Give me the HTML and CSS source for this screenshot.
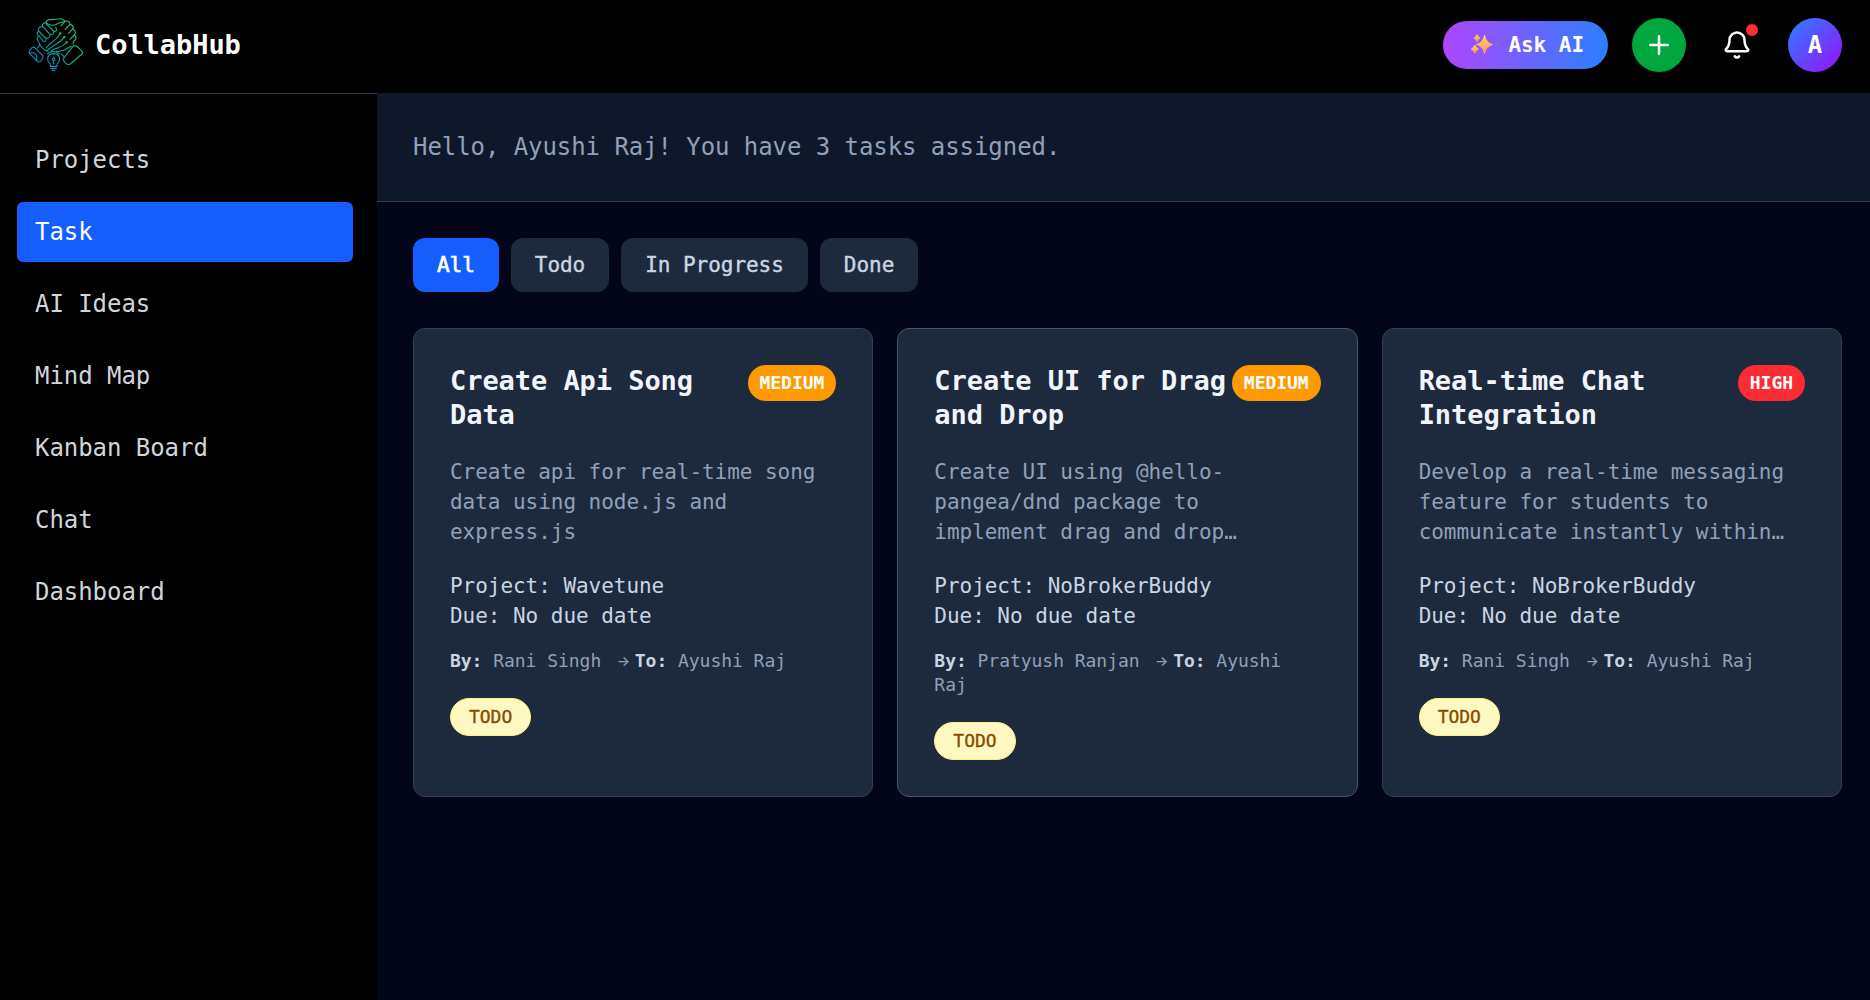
FILE: index.html
```html
<!DOCTYPE html>
<html lang="en">
<head>
<meta charset="utf-8">
<title>CollabHub</title>
<link rel="stylesheet" href="styles.css">
</head>
<body>
<header class="topbar">
  <div class="brand">
    <svg class="logo" viewBox="24 24 168 162" fill="none" stroke="url(#lg)" stroke-width="3.3" stroke-linecap="round" stroke-linejoin="round">
      <defs><linearGradient id="lg" gradientUnits="userSpaceOnUse" x1="45" y1="165" x2="160" y2="35"><stop offset="0" stop-color="#0c8bd2"/><stop offset=".5" stop-color="#149b94"/><stop offset="1" stop-color="#22d673"/></linearGradient></defs>
      <path d="M80 43C76 30 84 28 96 29L114 27C122 25 131 28 135 34C144 31 150 36 150 43C158 44 161 51 158 57C168 62 168 69 163 75C171 82 168 90 161 94L159 102"/>
      <path d="M82 41C91 49 106 46 114 40L133 35"/>
      <path d="M135 34L123 48M150 43L136 58M158 57L145 71M163 75L150 88"/>
      <path d="M80 39C69 37 65 45 68 50C58 49 53 57 56 63C48 69 52 76 57 78C48 84 51 91 57 98L60 105"/>
      <path d="M80 43L102 64C110 66 112 58 107 52M68 50L90 73C97 77 103 71 101 64M56 63L76 84C84 88 91 80 90 73M57 78L70 94C77 96 80 90 77 85"/>
      <path d="M60 105L72 119L84 124M79 113C92 95 107 95 120 72M82 121C94 106 113 106 132 83M94 123C110 110 122 117 138 99M110 124C124 126 136 120 153 109"/>
      <circle cx="121" cy="70" r="2"/><circle cx="133" cy="81" r="2"/><circle cx="140" cy="97" r="2"/>
      <path d="M29 121L35 114Q40 109 45 114L68 136Q71 140 68 145L62 153Q57 159 51 153L29 131Q26 126 29 121ZM32 129Q40 125 48 133Q52 140 50 150M60 105L52 114"/>
      <path d="M130 146L158 110Q163 105 169 108L184 121Q190 127 186 132L151 162Q144 166 138 161L133 155Q128 151 130 146M124 132L132 140"/>
      <path d="M91 169V162Q83 156 83 148Q83 132 101 131Q119 132 119 148Q119 156 111 162V169ZM93 175H109M97 181H105M82 132Q100 118 119 132"/>
      <path d="M101 161V151M101 144a4 4 0 1 0 .1 0"/>
    </svg>
    <span class="brand-name">CollabHub</span>
  </div>
  <div class="actions">
    <button class="ask">
      <svg class="sparkles" viewBox="0 0 22 22"><defs><linearGradient id="sp" x1="0" y1="0" x2="0" y2="1"><stop offset="0" stop-color="#ffd45c"/><stop offset="1" stop-color="#ff9166"/></linearGradient></defs><g fill="url(#sp)" stroke="url(#sp)" stroke-width="1.2" stroke-linejoin="round"><path d="M13.5 1.5Q14.8 8.8 21.2 10.5Q14.8 12.2 13.5 19.5Q12.2 12.2 5.8 10.5Q12.2 8.8 13.5 1.5Z"/><path d="M6 1Q6.6 3.6 8.7 4.2Q6.6 4.8 6 7.4Q5.4 4.8 3.3 4.2Q5.4 3.6 6 1Z"/><path d="M3.8 11.5Q4.6 14.2 7.2 15.1Q4.6 16 3.8 18.8Q3 16 .6 15.1Q3 14.2 3.8 11.5Z"/></g></svg>
      <span>Ask AI</span>
    </button>
    <button class="add" aria-label="Add">
      <svg class="icon" viewBox="0 0 24 24"><path d="M5 12h14M12 5v14"/></svg>
    </button>
    <button class="bell" aria-label="Notifications">
      <svg class="icon" viewBox="0 0 24 24"><path d="M10.268 21a2 2 0 0 0 3.464 0"/><path d="M3.262 15.326A1 1 0 0 0 4 17h16a1 1 0 0 0 .74-1.673C19.41 13.956 18 12.499 18 8A6 6 0 0 0 6 8c0 4.499-1.411 5.956-2.738 7.326"/></svg>
      <span class="dot"></span>
    </button>
    <div class="avatar">A</div>
  </div>
</header>
<div class="body">
  <nav class="sidebar">
    <a class="nav-item">Projects</a>
    <a class="nav-item active">Task</a>
    <a class="nav-item">AI Ideas</a>
    <a class="nav-item">Mind Map</a>
    <a class="nav-item">Kanban Board</a>
    <a class="nav-item">Chat</a>
    <a class="nav-item">Dashboard</a>
  </nav>
  <main class="main">
    <div class="greeting">Hello, Ayushi Raj! You have 3 tasks assigned.</div>
    <div class="content">
      <div class="filters">
        <button class="filter selected">All</button>
        <button class="filter">Todo</button>
        <button class="filter">In Progress</button>
        <button class="filter">Done</button>
      </div>
      <div class="cards">
        <article class="card">
          <div class="card-head"><h2 class="title">Create Api Song Data</h2><span class="priority">MEDIUM</span></div>
          <p class="desc">Create api for real-time song data using node.js and express.js</p>
          <div class="meta">Project: Wavetune<br>Due: No due date</div>
          <p class="people"><b>By:</b> Rani Singh <span class="arrow">→</span><b>To:</b> Ayushi Raj</p>
          <span class="status">TODO</span>
        </article>
        <article class="card hovered">
          <div class="card-head"><h2 class="title">Create UI for Drag and Drop</h2><span class="priority">MEDIUM</span></div>
          <p class="desc">Create UI using @hello-<br>pangea/dnd package to implement drag and drop…</p>
          <div class="meta">Project: NoBrokerBuddy<br>Due: No due date</div>
          <p class="people"><b>By:</b> Pratyush Ranjan <span class="arrow">→</span><b>To:</b> <span>Ayushi</span> <span>Raj</span></p>
          <span class="status">TODO</span>
        </article>
        <article class="card">
          <div class="card-head"><h2 class="title">Real-time Chat Integration</h2><span class="priority high">HIGH</span></div>
          <p class="desc">Develop a real-time messaging feature for students to communicate instantly within…</p>
          <div class="meta">Project: NoBrokerBuddy<br>Due: No due date</div>
          <p class="people"><b>By:</b> Rani Singh <span class="arrow">→</span><b>To:</b> Ayushi Raj</p>
          <span class="status">TODO</span>
        </article>
      </div>
    </div>
  </main>
</div>
</body>
</html>
```
FILE: styles.css
```css
* { box-sizing: border-box; }
body {
  margin: 0;
  height: 1000px;
  display: flex;
  flex-direction: column;
  background: #000;
  color: #fff;
  font-family: "DejaVu Sans Mono", "Liberation Mono", monospace;
  font-size: 24px;
  line-height: 36px;
  overflow: hidden;
}
button { border: 0; padding: 0; background: none; color: inherit; font: inherit; }
h2, p { margin: 0; }

.topbar {
  height: 93px;
  flex: none;
  display: flex;
  justify-content: space-between;
  align-items: flex-start;
  padding: 18px 28px 0;
}
.brand { display: flex; align-items: center; gap: 11px; height: 54px; }
.logo { width: 56px; height: 54px; }
.brand-name { font-size: 27px; font-weight: 700; letter-spacing: -0.055px; }
.actions { display: flex; align-items: center; gap: 24px; height: 54px; }
.ask {
  width: 165px;
  height: 48px;
  border-radius: 24px;
  padding: 0 24px 0 28px;
  display: flex;
  align-items: center;
  justify-content: space-between;
  background: linear-gradient(90deg, #ad46ff, #2b7fff);
  font-size: 21px;
  font-weight: 700;
  letter-spacing: -0.04px;
}
.sparkles { width: 22px; height: 22px; }
.add, .bell, .avatar {
  width: 54px;
  height: 54px;
  border-radius: 50%;
  display: flex;
  align-items: center;
  justify-content: center;
}
.add { background: #00a63e; }
.icon { width: 30px; height: 30px; fill: none; stroke: #fff; stroke-width: 2; stroke-linecap: round; stroke-linejoin: round; }
.bell { position: relative; }
.dot { position: absolute; top: 6px; right: 6px; width: 12px; height: 12px; border-radius: 50%; background: #fb2c36; }
.avatar { background: linear-gradient(135deg, #2b7fff, #9810fa); font-weight: 700; }

.body { flex: 1; display: flex; min-height: 0; }
.sidebar {
  width: 377px;
  flex: none;
  border-top: 1px solid #2c3848;
  padding: 36px 24px 0 17px;
  display: flex;
  flex-direction: column;
  gap: 12px;
}
.nav-item { height: 60px; padding: 12px 18px; border-radius: 6px; color: #d1d5dc; letter-spacing: -0.05px; }
.nav-item.active { background: #155dfc; color: #fff; }

.main { flex: 1; background: #020618; }
.greeting {
  height: 109px;
  padding: 36px;
  background: #0f172b;
  border-bottom: 1px solid #314158;
  color: #90a1b9;
  letter-spacing: -0.065px;
}
.content { padding: 36px 28px 0 36px; }
.filters { display: flex; gap: 12px; margin-bottom: 36px; }
.filter {
  height: 54px;
  padding: 0 24px;
  border-radius: 12px;
  background: #1d293d;
  color: #cad5e2;
  font-size: 21px;
  letter-spacing: -0.043px;
  -webkit-text-stroke: 0.4px currentColor;
}
.filter.selected { background: #155dfc; color: #fff; -webkit-text-stroke-width: 0.7px; }

.cards { display: grid; grid-template-columns: repeat(3, minmax(0, 1fr)); gap: 24px; }
.card {
  height: 469px;
  padding: 36px;
  border: 1px solid #314158;
  border-radius: 12px;
  background: #1d293d;
  font-size: 21px;
  line-height: 30px;
  letter-spacing: -0.043px;
}
.card.hovered { border-color: #45556c; }
.card-head { display: flex; align-items: flex-start; justify-content: space-between; height: 67.5px; margin-bottom: 24px; }
.title { margin-top: -1px; font-size: 27px; line-height: 33.75px; font-weight: 700; color: #f1f5f9; letter-spacing: -0.056px; }
.priority {
  flex: none;
  padding: 6px 12px;
  border-radius: 18px;
  background: #fe9a00;
  color: #fff;
  font-size: 18px;
  line-height: 24px;
  font-weight: 700;
  letter-spacing: -0.037px;
}
.priority.high { background: #fb2c36; }
.desc { color: #90a1b9; margin-bottom: 24px; }
.meta { color: #cad5e2; margin-bottom: 18px; }
.people { font-size: 18px; line-height: 24px; color: #90a1b9; letter-spacing: -0.037px; margin-bottom: 25.5px; }
.people b { color: #cad5e2; }
.arrow {
  display: inline-flex;
  justify-content: center;
  width: 10.8px;
  height: 24px;
  margin: 0 6px;
  vertical-align: top;
  font: 500 14px/24px Inter, sans-serif;
}
.status {
  display: inline-block;
  vertical-align: top;
  padding: 6px 18px;
  border: 1px solid #fff085;
  border-radius: 19px;
  background: #fef9c2;
  color: #894b00;
  font-size: 18px;
  line-height: 24px;
  letter-spacing: -0.037px;
  -webkit-text-stroke: 0.3px currentColor;
}
```
